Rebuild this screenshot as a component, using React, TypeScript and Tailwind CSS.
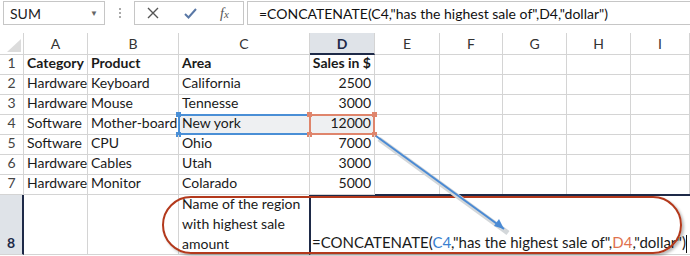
import React from 'react';

const cols = ['A', 'B', 'C', 'D', 'E', 'F', 'G', 'H', 'I'];

const rows = [
  ['Category', 'Product', 'Area', 'Sales in $'],
  ['Hardware', 'Keyboard', 'California', '2500'],
  ['Hardware', 'Mouse', 'Tennesse', '3000'],
  ['Software', 'Mother-board', 'New york', '12000'],
  ['Software', 'CPU', 'Ohio', '7000'],
  ['Hardware', 'Cables', 'Utah', '3000'],
  ['Hardware', 'Monitor', 'Colarado', '5000'],
];

const grid = 'border-r border-b border-[#d4d4d4]';

const Corner = ({ className }: { className: string }) => (
  <span className={`absolute w-[5px] h-[5px] ${className}`} />
);

const Toolbar = () => (
  <div className="flex items-start h-[33px]">
    <div className="ml-[3px] mt-[1px] w-[102px] h-[24px] border border-[#c6c6c6] flex items-center justify-between pl-[6px] pr-[6px] text-[14px] text-[#222]">
      <span>SUM</span>
      <span className="text-[8px] text-[#666]">▼</span>
    </div>
    <div className="ml-[14px] mt-[8px] flex flex-col gap-[2px]">
      <span className="w-[2px] h-[2px] bg-[#aaa]" />
      <span className="w-[2px] h-[2px] bg-[#aaa]" />
      <span className="w-[2px] h-[2px] bg-[#aaa]" />
    </div>
    <div className="ml-[13px] mt-[1px] w-[110px] h-[24px] border border-[#c6c6c6] flex items-center">
      <svg width="12" height="12" viewBox="0 0 12 12" className="ml-[12px]">
        <path d="M1 1 L11 11 M11 1 L1 11" stroke="#555" strokeWidth="1.4" />
      </svg>
      <svg width="13" height="11" viewBox="0 0 13 11" className="ml-[25px]">
        <path d="M1 6 L4.5 9.5 L12 1" stroke="#5a78a6" strokeWidth="2" fill="none" />
      </svg>
      <span className="ml-[23px] text-[14px] italic text-[#555] font-['Liberation_Serif',serif]">
        f<span className="text-[11px]">x</span>
      </span>
    </div>
    <div className="ml-[3px] mt-[1px] flex-1 h-[24px] border border-r-0 border-[#c6c6c6] flex items-center pl-[11px] text-[14px] text-[#111]">
      =CONCATENATE(C4,"has the highest sale of",D4,"dollar")
    </div>
  </div>
);

export default function App() {
  return (
    <div className="relative w-[690px] h-[256px] overflow-hidden bg-white font-['Lato',sans-serif] text-[#1a1a1a]">
      <Toolbar />
      <div className="grid grid-cols-[24px_64px_91px_131px_65px_65px_63px_64px_64px_59px] grid-rows-[22px_20px_20px_20px_20px_20px_20px_20px_60px] text-[14px]">
        <div className="relative border-r border-b border-[#d4d4d4]">
          <svg width="14" height="13" viewBox="0 0 14 13" className="absolute right-[2px] bottom-[2px]">
            <path d="M14 0 L14 13 L0 13 Z" fill="#dcdcdc" />
          </svg>
        </div>
        {cols.map((c) =>
          c === 'D' ? (
            <div
              key={c}
              className="flex items-center justify-center bg-[#dfe3e8] border-b-2 border-[#1e2a48] border-r border-r-[#d4d4d4] text-[#1e2a48] font-bold text-[14px]"
            >
              {c}
            </div>
          ) : (
            <div key={c} className={`flex items-center justify-center ${grid} text-[#333] text-[14px]`}>
              {c}
            </div>
          )
        )}

        {rows.map((r, i) => (
          <React.Fragment key={i}>
            <div className={`flex items-end justify-center pb-[1px] ${grid} text-[#444] text-[14px]`}>{i + 1}</div>
            {r.map((v, j) => {
              const isC4 = i === 3 && j === 2;
              const isD4 = i === 3 && j === 3;
              const bold = i === 0;
              return (
                <div
                  key={j}
                  className={`relative flex items-end pb-[1px] px-[3px] ${grid} ${
                    j === 3 ? 'justify-end' : ''
                  } ${bold ? 'font-bold' : ''} ${isC4 || isD4 ? 'bg-[#eef0f2]' : ''} whitespace-nowrap`}
                >
                  {v}
                  {isC4 && (
                    <>
                      <span className="absolute left-[-1px] right-[-1px] top-[-1px] bottom-[-1px] border-y-2 border-l-2 border-[#4a8fd6]" />
                      <Corner className="left-[-3px] top-[-3px] bg-[#4a8fd6]" />
                      <Corner className="left-[-3px] bottom-[-3px] bg-[#4a8fd6]" />
                    </>
                  )}
                  {isD4 && (
                    <>
                      <span className="absolute left-[-1px] right-[-1px] top-[-1px] bottom-[-1px] border-2 border-[#df856c]" />
                      <Corner className="left-[-3px] top-[-3px] bg-[#df856c]" />
                      <Corner className="left-[-3px] bottom-[-3px] bg-[#df856c]" />
                      <Corner className="right-[-3px] top-[-3px] bg-[#df856c]" />
                      <Corner className="right-[-3px] bottom-[-3px] bg-[#df856c]" />
                    </>
                  )}
                </div>
              );
            })}
            {[0, 1, 2, 3, 4].map((k) => (
              <div key={`e${k}`} className={grid} />
            ))}
          </React.Fragment>
        ))}

        <div className="flex items-end justify-center pb-[1px] bg-[#dfe3e8] border-r-2 border-[#1e2a48] border-b border-b-[#d4d4d4] text-[#1e2a48] font-bold text-[14px]">
          8
        </div>
        <div className={grid} />
        <div className={grid} />
        <div className={`flex flex-col justify-end px-[3px] leading-[20px] whitespace-nowrap ${grid}`}>
          <span>Name of the region</span>
          <span>with highest sale</span>
          <span>amount</span>
        </div>
        <div className="col-span-6 flex items-end pb-[1px] border-l-2 border-t-2 border-[#1e2a48] border-b border-b-[#d4d4d4] ml-[-1px] mt-[-1px] pl-[1px] whitespace-nowrap text-[15px]">
          <span>
            =CONCATENATE(<span className="text-[#3a7fd0]">C4</span>,"has the highest sale of",
            <span className="text-[#e0714e]">D4</span>,"dollar")
          </span>
          <span className="inline-block w-[1px] h-[18px] bg-[#111]" />
        </div>
      </div>

      <div className="absolute left-[162px] top-[196px] w-[520px] h-[58px] rounded-[29px] border-2 border-[#b3391c] shadow-[2px_2px_3px_rgba(0,0,0,0.28)] pointer-events-none" />

      <svg width="690" height="256" className="absolute left-0 top-0 pointer-events-none">
        <line x1="379" y1="139" x2="508" y2="233" stroke="#d3d7da" strokeWidth="5" />
        <line x1="376" y1="136" x2="504" y2="229" stroke="#4a8ad4" strokeWidth="2" />
        <path d="M504 229 L494 226 L499 219 Z" fill="#4a8ad4" />
      </svg>
    </div>
  );
}
